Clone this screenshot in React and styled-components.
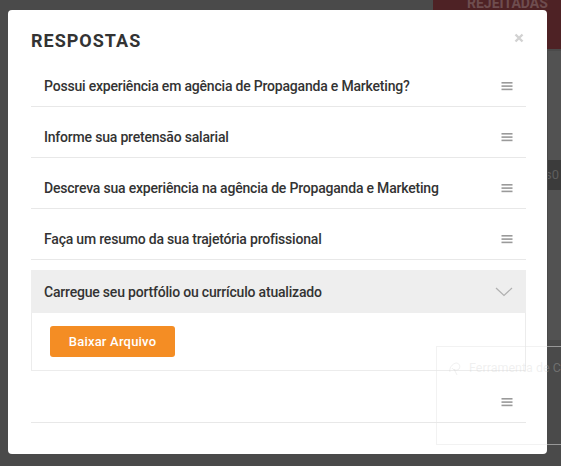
import React from "react";
import styled, { createGlobalStyle } from "styled-components";

const Global = createGlobalStyle`
  html, body { margin: 0; padding: 0; }
  body {
    width: 561px;
    height: 466px;
    overflow: hidden;
    font-family: Roboto, "Liberation Sans", Arial, sans-serif;
    background: #4a4a4a;
  }
`;

const Page = styled.div`
  position: relative;
  width: 561px;
  height: 466px;
  background: #4a4a4a;
  overflow: hidden;
`;

const TopBar = styled.div`
  display: flex;
  justify-content: flex-end;
  height: 51px;
`;

const RejectButton = styled.div`
  width: 128px;
  height: 51px;
  background: #4e2225;
  color: #6e4d4f;
  font-size: 14px;
  font-weight: 700;
  line-height: 10px;
  padding-left: 34px;
  box-sizing: border-box;
  margin-top: -2px;
`;

const SideStrip = styled.div`
  display: flex;
  flex-direction: column;
  align-items: flex-end;
`;

const SideBlock = styled.div`
  width: 13px;
  height: ${(p) => p.h}px;
  background: ${(p) => p.bg};
  color: #5e5e5e;
  font-size: 13px;
  line-height: ${(p) => p.h}px;
  text-indent: -3px;
  overflow: hidden;
  white-space: nowrap;
`;

const Modal = styled.div`
  position: absolute;
  left: 8px;
  top: 10px;
  width: 539px;
  height: 444px;
  box-sizing: border-box;
  background: #fff;
  border-radius: 4px;
  padding: 19px 21px 0 23px;
`;

const Header = styled.div`
  display: flex;
  justify-content: space-between;
  align-items: center;
  height: 24px;
  margin-bottom: 3px;
`;

const Title = styled.h2`
  margin: 0;
  font-size: 18px;
  font-weight: 700;
  letter-spacing: 1px;
  color: #333;
  line-height: 24px;
`;

const Close = styled.div`
  width: 10px;
  height: 10px;
  margin-right: 2px;
  margin-top: -6px;
  display: flex;
`;

const List = styled.div`
  display: flex;
  flex-direction: column;
`;

const Row = styled.div`
  display: flex;
  align-items: center;
  justify-content: space-between;
  margin-top: 10px;
  padding: 10px 14px 10px 13px;
  min-height: ${(p) => p.min || 20}px;
  border-bottom: 1px solid #e8e8e8;
`;

const Question = styled.span`
  font-size: 14px;
  font-weight: 500;
  letter-spacing: -0.2px;
  color: #333;
  line-height: 20px;
`;

const Expanded = styled.div`
  margin-top: 10px;
  display: flex;
  flex-direction: column;
`;

const ExpandedHeader = styled.div`
  display: flex;
  align-items: center;
  justify-content: space-between;
  background: #eeeeee;
  padding: 12px 14px 11px 13px;
`;

const ExpandedBody = styled.div`
  border: 1px solid #ececec;
  border-top: none;
  padding: 13px 19px 13px 18px;
`;

const DownloadButton = styled.button`
  display: block;
  height: 31px;
  width: 125px;
  border: none;
  border-radius: 3px;
  background: #f48d24;
  color: #fff;
  font-family: Roboto, "Liberation Sans", Arial, sans-serif;
  font-size: 13px;
  font-weight: 500;
  letter-spacing: 0.2px;
  padding: 0;
  cursor: pointer;
`;

const Ghost = styled.div`
  position: absolute;
  left: 436px;
  top: 346px;
  width: 130px;
  height: 99px;
  box-sizing: border-box;
  border: 1px solid rgba(230, 230, 230, 0.5);
  padding: 13px 0 0 10px;
  display: flex;
  align-items: flex-start;
  gap: 6px;
  color: rgba(205, 205, 205, 0.3);
  font-size: 12.5px;
  line-height: 16px;
  white-space: nowrap;
  pointer-events: none;

  svg { flex-shrink: 0; }
`;

const Hamburger = () => (
  <svg width="12" height="10" viewBox="0 0 12 10" style={{ marginRight: -1 }}>
    <rect x="0.5" y="1" width="11" height="1.6" fill="#9a9a9a" />
    <rect x="0.5" y="4.3" width="11" height="1.6" fill="#9a9a9a" />
    <rect x="0.5" y="7.6" width="11" height="1.6" fill="#9a9a9a" />
  </svg>
);

const Chevron = () => (
  <svg width="18" height="10" viewBox="0 0 18 10" style={{ marginRight: -1 }}>
    <polyline points="1,1 9,8.5 17,1" fill="none" stroke="#b0b0b0" strokeWidth="1.2" />
  </svg>
);

const questions = [
  "Possui experiência em agência de Propaganda e Marketing?",
  "Informe sua pretensão salarial",
  "Descreva sua experiência na agência de Propaganda e Marketing",
  "Faça um resumo da sua trajetória profissional",
];

export default function App() {
  return (
    <>
      <Global />
      <Page>
        <TopBar>
          <RejectButton>REJEITADAS</RejectButton>
        </TopBar>
        <SideStrip>
          <SideBlock h={109} bg="#525252" />
          <SideBlock h={30} bg="#3b3b3b">s0</SideBlock>
          <SideBlock h={150} bg="#525252" />
        </SideStrip>
        <Modal>
          <Header>
            <Title>RESPOSTAS</Title>
            <Close>
              <svg width="10" height="10" viewBox="0 0 10 10">
                <path d="M1.5 1.5 L8.5 8.5 M8.5 1.5 L1.5 8.5" stroke="#d2d2d2" strokeWidth="2.4" />
              </svg>
            </Close>
          </Header>
          <List>
            {questions.map((q) => (
              <Row key={q}>
                <Question>{q}</Question>
                <Hamburger />
              </Row>
            ))}
            <Expanded>
              <ExpandedHeader>
                <Question>Carregue seu portfólio ou currículo atualizado</Question>
                <Chevron />
              </ExpandedHeader>
              <ExpandedBody>
                <DownloadButton>Baixar Arquivo</DownloadButton>
              </ExpandedBody>
            </Expanded>
            <Row min={21}>
              <Question />
              <Hamburger />
            </Row>
          </List>
        </Modal>
        <Ghost>
          <svg width="16" height="16" viewBox="0 0 16 16">
            <path d="M3 12 C2 8 5 4 9 3 C12 3 14 6 12 9 C10 11 6 10 5 8 M7 9 L10 15" fill="none" stroke="rgba(205,205,205,0.3)" strokeWidth="1" />
          </svg>
          <span>Ferramenta de Cap</span>
        </Ghost>
      </Page>
    </>
  );
}
